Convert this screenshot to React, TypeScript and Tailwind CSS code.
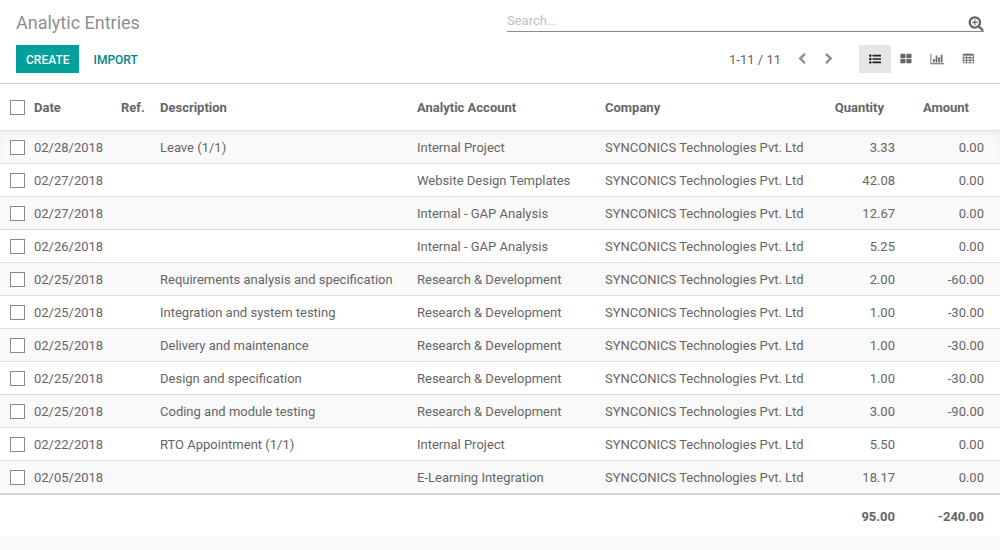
import React, { useState } from 'react';
import clsx from 'clsx';

interface Entry {
  date: string;
  ref: string;
  description: string;
  account: string;
  quantity: number;
  amount: number;
}

const COMPANY = 'SYNCONICS Technologies Pvt. Ltd';

const ENTRIES: Entry[] = [
  { date: '02/28/2018', ref: '', description: 'Leave (1/1)', account: 'Internal Project', quantity: 3.33, amount: 0 },
  { date: '02/27/2018', ref: '', description: '', account: 'Website Design Templates', quantity: 42.08, amount: 0 },
  { date: '02/27/2018', ref: '', description: '', account: 'Internal - GAP Analysis', quantity: 12.67, amount: 0 },
  { date: '02/26/2018', ref: '', description: '', account: 'Internal - GAP Analysis', quantity: 5.25, amount: 0 },
  { date: '02/25/2018', ref: '', description: 'Requirements analysis and specification', account: 'Research & Development', quantity: 2, amount: -60 },
  { date: '02/25/2018', ref: '', description: 'Integration and system testing', account: 'Research & Development', quantity: 1, amount: -30 },
  { date: '02/25/2018', ref: '', description: 'Delivery and maintenance', account: 'Research & Development', quantity: 1, amount: -30 },
  { date: '02/25/2018', ref: '', description: 'Design and specification', account: 'Research & Development', quantity: 1, amount: -30 },
  { date: '02/25/2018', ref: '', description: 'Coding and module testing', account: 'Research & Development', quantity: 3, amount: -90 },
  { date: '02/22/2018', ref: '', description: 'RTO Appointment (1/1)', account: 'Internal Project', quantity: 5.5, amount: 0 },
  { date: '02/05/2018', ref: '', description: '', account: 'E-Learning Integration', quantity: 18.17, amount: 0 },
];

const ICONS = {
  searchPlus: 'M1088 800v64q0 13-9.5 22.5t-22.5 9.5h-224v224q0 13-9.5 22.5t-22.5 9.5h-64q-13 0-22.5-9.5t-9.5-22.5v-224h-224q-13 0-22.5-9.5t-9.5-22.5v-64q0-13 9.5-22.5t22.5-9.5h224v-224q0-13 9.5-22.5t22.5-9.5h64q13 0 22.5 9.5t9.5 22.5v224h224q13 0 22.5 9.5t9.5 22.5zm128 32q0-185-131.5-316.5t-316.5-131.5-316.5 131.5-131.5 316.5 131.5 316.5 316.5 131.5 316.5-131.5 131.5-316.5zm512 832q0 53-37.5 90.5t-90.5 37.5q-54 0-90-38l-343-342q-179 124-399 124-143 0-273.5-55.5t-225-150-150-225-55.5-273.5 55.5-273.5 150-225 225-150 273.5-55.5 273.5 55.5 225 150 150 225 55.5 273.5q0 220-124 399l343 343q37 37 37 90z',
  chevronLeft: 'M1427 301l-531 531 531 531q19 19 19 45t-19 45l-166 166q-19 19-45 19t-45-19l-742-742q-19-19-19-45t19-45l742-742q19-19 45-19t45 19l166 166q19 19 19 45t-19 45z',
  chevronRight: 'M1363 877l-742 742q-19 19-45 19t-45-19l-166-166q-19-19-19-45t19-45l531-531-531-531q-19-19-19-45t19-45l166-166q19-19 45-19t45 19l742 742q19 19 19 45t-19 45z',
  list: 'M384 1408q0 80-56 136t-136 56-136-56-56-136 56-136 136-56 136 56 56 136zm0-512q0 80-56 136t-136 56-136-56-56-136 56-136 136-56 136 56 56 136zm1408 416v192q0 13-9.5 22.5t-22.5 9.5h-1216q-13 0-22.5-9.5t-9.5-22.5v-192q0-13 9.5-22.5t22.5-9.5h1216q13 0 22.5 9.5t9.5 22.5zm-1408-928q0 80-56 136t-136 56-136-56-56-136 56-136 136-56 136 56 56 136zm1408 416v192q0 13-9.5 22.5t-22.5 9.5h-1216q-13 0-22.5-9.5t-9.5-22.5v-192q0-13 9.5-22.5t22.5-9.5h1216q13 0 22.5 9.5t9.5 22.5zm0-512v192q0 13-9.5 22.5t-22.5 9.5h-1216q-13 0-22.5-9.5t-9.5-22.5v-192q0-13 9.5-22.5t22.5-9.5h1216q13 0 22.5 9.5t9.5 22.5z',
  kanban: 'M832 1024v384q0 52-38 90t-90 38h-512q-52 0-90-38t-38-90v-384q0-52 38-90t90-38h512q52 0 90 38t38 90zm0-768v384q0 52-38 90t-90 38h-512q-52 0-90-38t-38-90v-384q0-52 38-90t90-38h512q52 0 90 38t38 90zm896 768v384q0 52-38 90t-90 38h-512q-52 0-90-38t-38-90v-384q0-52 38-90t90-38h512q52 0 90 38t38 90zm0-768v384q0 52-38 90t-90 38h-512q-52 0-90-38t-38-90v-384q0-52 38-90t90-38h512q52 0 90 38t38 90z',
  graph: 'M640 896v512h-256v-512h256zm384-512v1024h-256v-1024h256zm1024 1152v128h-2048v-1536h128v1408h1920zm-640-896v768h-256v-768h256zm384-384v1152h-256v-1152h256z',
  pivot: 'M224 128h1344q66 0 113 47t47 113v1088q0 66-47 113t-113 47h-1344q-66 0-113-47t-47-113v-1088q0-66 47-113t113-47zM192 416v192q0 32 32 32h320q32 0 32-32v-192q0-32-32-32h-320q-32 0-32 32zM704 416v192q0 32 32 32h320q32 0 32-32v-192q0-32-32-32h-320q-32 0-32 32zM1216 416v192q0 32 32 32h320q32 0 32-32v-192q0-32-32-32h-320q-32 0-32 32zM192 800v192q0 32 32 32h320q32 0 32-32v-192q0-32-32-32h-320q-32 0-32 32zM704 800v192q0 32 32 32h320q32 0 32-32v-192q0-32-32-32h-320q-32 0-32 32zM1216 800v192q0 32 32 32h320q32 0 32-32v-192q0-32-32-32h-320q-32 0-32 32zM192 1184v192q0 32 32 32h320q32 0 32-32v-192q0-32-32-32h-320q-32 0-32 32zM704 1184v192q0 32 32 32h320q32 0 32-32v-192q0-32-32-32h-320q-32 0-32 32zM1216 1184v192q0 32 32 32h320q32 0 32-32v-192q0-32-32-32h-320q-32 0-32 32z',
};

type IconName = keyof typeof ICONS;

const VIEWS: { id: IconName; label: string }[] = [
  { id: 'list', label: 'List' },
  { id: 'kanban', label: 'Kanban' },
  { id: 'graph', label: 'Graph' },
  { id: 'pivot', label: 'Pivot' },
];

// Most glyphs are square, the others carry their own box
const VIEW_BOXES: Partial<Record<IconName, string>> = {
  kanban: '160 0 1792 1792',
  graph: '100 0 2048 1792',
  pivot: '100 0 1792 1792',
};

const Icon: React.FC<{ name: IconName; className?: string }> = ({ name, className }) => (
  <svg
    viewBox={VIEW_BOXES[name] ?? '0 0 1792 1792'}
    fill="currentColor"
    fillRule="evenodd"
    overflow="visible"
    aria-hidden="true"
    className={className}
  >
    <path d={ICONS[name]} />
  </svg>
);

const Checkbox: React.FC<{ label: string; checked: boolean; onChange: () => void }> = ({ label, checked, onChange }) => (
  <input
    type="checkbox"
    aria-label={label}
    checked={checked}
    onChange={onChange}
    className="block size-[15px] appearance-none border border-[#8a8a8a] bg-white checked:bg-[#00a09d]"
  />
);

const total = (key: 'quantity' | 'amount') => ENTRIES.reduce((sum, e) => sum + e[key], 0).toFixed(2);

export default function App() {
  const [view, setView] = useState<IconName>('list');
  const [query, setQuery] = useState('');
  const [selected, setSelected] = useState<number[]>([]);

  const allSelected = selected.length === ENTRIES.length;

  const toggle = (index: number) =>
    setSelected(prev => (prev.includes(index) ? prev.filter(i => i !== index) : [...prev, index]));

  return (
    <div className="min-h-screen bg-[#f9f9f9] font-['Roboto',sans-serif] text-[13px] leading-5 text-[#666666]">

      {/* Control panel */}
      <header className="grid grid-cols-2 border-b border-[#c8c8c8] bg-white pb-2.5">
        <h1 className="h-[45px] pt-[11px] pl-4 text-lg leading-6 text-[#8f8f8f]">Analytic Entries</h1>
        <div className="pt-2.5 pr-4 pl-[7px]">
          <div className="flex h-[22px] items-center border-b border-[#8a8a8a]">
            <input
              type="text"
              aria-label="Search"
              placeholder="Search..."
              value={query}
              onChange={e => setQuery(e.target.value)}
              className="min-w-0 flex-1 bg-transparent outline-none placeholder:text-[#c0c0c0]"
            />
            <button type="button" aria-label="Advanced search" className="pt-1 text-[#666666]">
              <Icon name="searchPlus" className="size-4" />
            </button>
          </div>
        </div>
        <div className="flex gap-1 pl-4 text-xs font-medium">
          <button type="button" className="h-7 bg-[#00a09d] px-2.5 pt-0.5 text-white">CREATE</button>
          <button type="button" className="h-7 px-2.5 pt-0.5 text-[#008784]">IMPORT</button>
        </div>
        <div className="flex items-center justify-end pr-4">
          <span className="mr-[7px] pt-0.5">1-11 / 11</span>
          <button type="button" aria-label="Previous" className="flex h-7 w-[27px] items-center justify-center text-[#8f8f8f]">
            <Icon name="chevronLeft" className="size-3" />
          </button>
          <button type="button" aria-label="Next" className="mr-[17px] flex h-7 w-[27px] items-center justify-center text-[#8f8f8f]">
            <Icon name="chevronRight" className="size-3" />
          </button>
          {VIEWS.map(v => (
            <button
              key={v.id}
              type="button"
              aria-label={v.label}
              aria-pressed={view === v.id}
              onClick={() => setView(v.id)}
              className={clsx(
                'flex h-7 items-center justify-center',
                view === v.id ? 'w-8 bg-[#e6e6e6] text-[#212121]' : 'w-[31px] text-[#666666]'
              )}
            >
              <Icon name={v.id} className={v.id === 'graph' ? 'h-3 w-3.5' : 'size-3'} />
            </button>
          ))}
        </div>
      </header>

      {/* Entries */}
      <table className="w-full table-fixed border-separate border-spacing-0 bg-white">
        <colgroup>
          <col className="w-[34px]" />
          <col className="w-[87px]" />
          <col className="w-[39px]" />
          <col />
          <col className="w-[188px]" />
          <col className="w-[215px]" />
          <col className="w-[75px]" />
          <col className="w-[105px]" />
        </colgroup>
        <thead>
          <tr className="h-[47px] text-left *:border-b *:border-[#e0e0e0] *:not-first:pt-0.5">
            <th className="pl-2.5">
              <Checkbox
                label="Select all"
                checked={allSelected}
                onChange={() => setSelected(allSelected ? [] : ENTRIES.map((_, i) => i))}
              />
            </th>
            <th>Date</th>
            <th>Ref.</th>
            <th>Description</th>
            <th>Analytic Account</th>
            <th>Company</th>
            <th className="pr-[11px] text-right">Quantity</th>
            <th className="pr-[31px] text-right">Amount</th>
          </tr>
        </thead>
        <tbody>
          {ENTRIES.map((entry, i) => (
            <tr
              key={i}
              className="h-[33px] whitespace-nowrap odd:bg-[#f9f9f9] first:shadow-[inset_0_4px_6px_rgba(0,0,0,0.04)] last:h-8 *:border-b *:border-[#e0e0e0] last:*:border-b-0 *:not-first:pt-0.5"
            >
              <td className="pl-2.5">
                <Checkbox label={`Select entry ${i + 1}`} checked={selected.includes(i)} onChange={() => toggle(i)} />
              </td>
              <td>{entry.date}</td>
              <td>{entry.ref}</td>
              <td>{entry.description}</td>
              <td>{entry.account}</td>
              <td>{COMPANY}</td>
              <td className="text-right">{entry.quantity.toFixed(2)}</td>
              <td className="pr-4 text-right">{entry.amount.toFixed(2)}</td>
            </tr>
          ))}
        </tbody>
        <tfoot>
          <tr className="h-11 text-right font-bold *:border-t-2 *:border-[#d4d4d4] *:pt-0.5">
            <td colSpan={6} />
            <td>{total('quantity')}</td>
            <td className="pr-4">{total('amount')}</td>
          </tr>
        </tfoot>
      </table>
    </div>
  );
}
